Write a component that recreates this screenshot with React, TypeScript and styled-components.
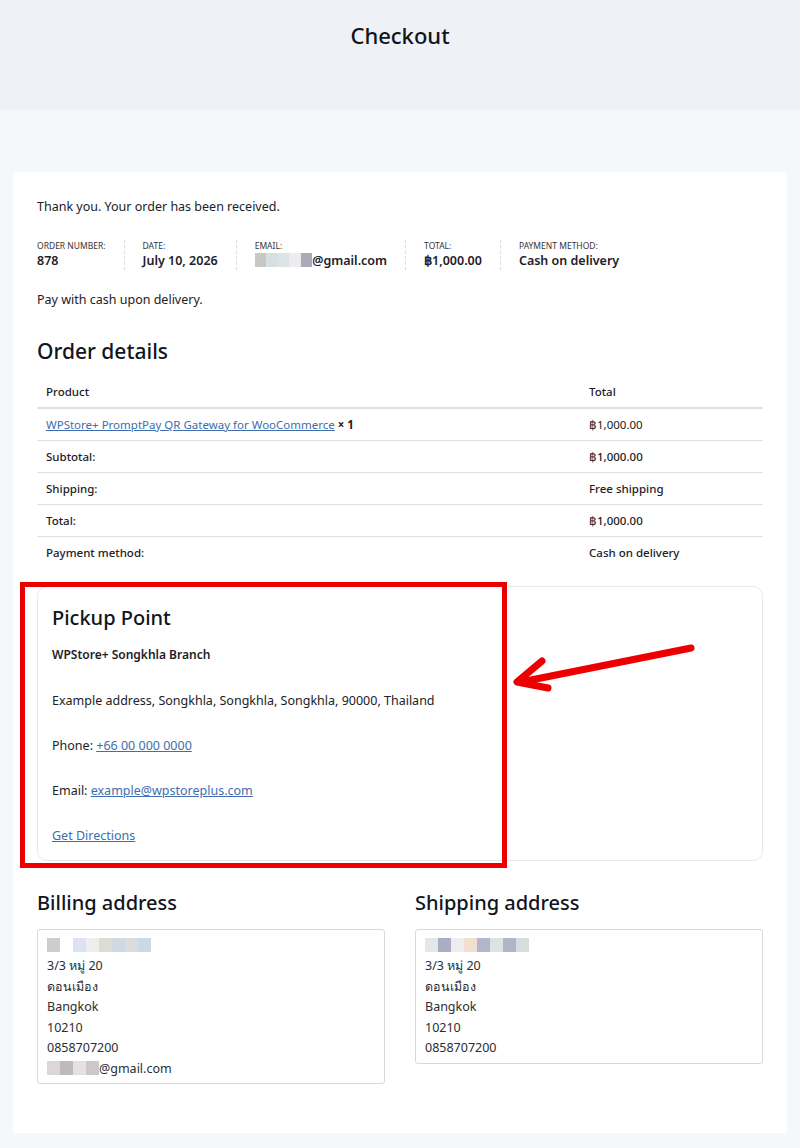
import * as React from 'react';
import styled, { createGlobalStyle } from 'styled-components';

const GlobalStyle = createGlobalStyle`
  html, body {
    margin: 0;
    padding: 0;
    background: #f5f8fa;
    font-family: "Noto Sans", "Open Sans", sans-serif;
    color: #1d2127;
  }
`;

const Header = styled.header`
  height: 110px;
  background: #eef2f6;
  display: flex;
  justify-content: center;
  padding-top: 19px;
  box-sizing: border-box;
`;

const Title = styled.h1`
  margin: 0;
  font-size: 22px;
  line-height: 32px;
  font-weight: 500;
  color: #0f1521;
`;

const Main = styled.main`
  padding: 62px 13px 14px;
`;

const Card = styled.section`
  background: #fff;
  padding: 25px 24px 49px;
`;

const Text = styled.p`
  margin: 0;
  font-size: 12.5px;
  line-height: 20px;
`;

const Overview = styled.ul`
  list-style: none;
  margin: 23px 0 20px;
  padding: 0;
  display: flex;
`;

const OverviewItem = styled.li<{ $last?: boolean }>`
  padding: 0 18px;
  border-right: ${p => (p.$last ? 'none' : '1px dashed #d8dbe0')};
  &:first-child { padding-left: 0; }
`;

const Label = styled.div`
  font-size: 8.5px;
  line-height: 12px;
  text-transform: uppercase;
  color: #333;
`;

const Value = styled.div`
  font-size: 12.5px;
  line-height: 18px;
  font-weight: 600;
`;

const Blur = styled.span<{ $c: string }>`
  display: inline-block;
  width: 13px;
  height: 14px;
  vertical-align: -2px;
  background: ${p => p.$c};
`;

const H2 = styled.h2<{ $size?: number }>`
  margin: 0;
  font-size: ${p => p.$size || 20}px;
  line-height: 28px;
  font-weight: 500;
  color: #0f1521;
`;

const Section = styled.div`
  margin-top: 27px;
`;

const Table = styled.table`
  width: 100%;
  margin-top: 10px;
  border-collapse: collapse;
  font-size: 11.5px;
`;

const Cell = styled.td<{ $w?: string }>`
  padding: 0 9px;
  height: 31px;
  border-bottom: 1px solid #dcdfe4;
  width: ${p => p.$w || 'auto'};
  tr:last-child > & { border-bottom: none; }
`;

const HeadCell = styled.th<{ $w?: string }>`
  text-align: left;
  font-weight: 500;
  padding: 0 9px;
  height: 32px;
  border-bottom: 2px solid #dcdfe4;
  width: ${p => p.$w || 'auto'};
`;

const Link = styled.a`
  color: #3e6db0;
  text-decoration: underline;
  cursor: pointer;
`;

const PickupWrap = styled.div`
  position: relative;
  margin-top: 18px;
`;

const PickupCard = styled.div`
  border: 1px solid #e6e8eb;
  border-radius: 10px;
  padding: 17px 14px 14px;
`;

const Branch = styled.div`
  margin-top: 13px;
  font-size: 12px;
  font-weight: 600;
  line-height: 20px;
`;

const PickupLine = styled.p`
  margin: 25px 0 0;
  font-size: 12.5px;
  line-height: 20px;
  &:first-of-type { margin-top: 26px; }
`;

const Highlight = styled.div`
  position: absolute;
  left: -17px;
  top: -4px;
  width: 487px;
  height: 286px;
  border: 5px solid #ee0000;
  box-sizing: border-box;
  pointer-events: none;
`;

const Arrow = styled.svg`
  position: absolute;
  left: 430px;
  top: 50px;
  pointer-events: none;
  overflow: visible;
`;

const Addresses = styled.div`
  margin-top: 28px;
  display: grid;
  grid-template-columns: 1fr 1fr;
  column-gap: 30px;
  align-items: start;
`;

const AddressBox = styled.address`
  margin-top: 12px;
  border: 1px solid #d6dae0;
  border-radius: 3px;
  padding: 4px 9px 4px;
  font-style: normal;
  font-size: 12.5px;
  line-height: 20.5px;
  color: #2a2e33;
`;

const BlurRow = styled.div`
  display: flex;
  height: 22px;
  align-items: center;
`;

const Name: React.FC<{ colors: string[] }> = ({ colors }) => (
  <BlurRow>{colors.map((c, i) => <Blur key={i} $c={c} />)}</BlurRow>
);

const lines = ['3/3 หมู่ 20', 'ดอนเมือง', 'Bangkok', '10210', '0858707200'];

const rows: [string, string][] = [
  ['Subtotal:', '฿1,000.00'],
  ['Shipping:', 'Free shipping'],
  ['Total:', '฿1,000.00'],
  ['Payment method:', 'Cash on delivery'],
];

export default function App() {
  return (
    <>
      <GlobalStyle />
      <Header><Title>Checkout</Title></Header>
      <Main>
        <Card>
          <Text>Thank you. Your order has been received.</Text>
          <Overview>
            <OverviewItem><Label>Order number:</Label><Value>878</Value></OverviewItem>
            <OverviewItem><Label>Date:</Label><Value>July 10, 2026</Value></OverviewItem>
            <OverviewItem>
              <Label>Email:</Label>
              <Value>
                {['#c9c7c6', '#d6e0e3', '#dde3e6', '#ececee', '#a9abb8'].map((c, i) => <Blur key={i} $c={c} style={{ width: 11.5 }} />)}
                @gmail.com
              </Value>
            </OverviewItem>
            <OverviewItem><Label>Total:</Label><Value>฿1,000.00</Value></OverviewItem>
            <OverviewItem $last><Label>Payment method:</Label><Value>Cash on delivery</Value></OverviewItem>
          </Overview>
          <Text>Pay with cash upon delivery.</Text>

          <Section>
            <H2 $size={21}>Order details</H2>
            <Table>
              <thead>
                <tr><HeadCell>Product</HeadCell><HeadCell $w="165px">Total</HeadCell></tr>
              </thead>
              <tbody>
                <tr>
                  <Cell><Link>WPStore+ PromptPay QR Gateway for WooCommerce</Link> <strong>× 1</strong></Cell>
                  <Cell $w="165px">฿1,000.00</Cell>
                </tr>
                {rows.map(([k, v]) => (
                  <tr key={k}>
                    <Cell style={{ fontWeight: 500 }}>{k}</Cell>
                    <Cell $w="165px" style={{ fontWeight: 500 }}>{v}</Cell>
                  </tr>
                ))}
              </tbody>
            </Table>
          </Section>

          <PickupWrap>
            <PickupCard>
              <H2>Pickup Point</H2>
              <Branch>WPStore+ Songkhla Branch</Branch>
              <PickupLine>Example address, Songkhla, Songkhla, Songkhla, 90000, Thailand</PickupLine>
              <PickupLine>Phone: <Link>+66 00 000 0000</Link></PickupLine>
              <PickupLine>Email: <Link>example@wpstoreplus.com</Link></PickupLine>
              <PickupLine><Link>Get Directions</Link></PickupLine>
            </PickupCard>
            <Highlight />
            <Arrow width="240" height="70" viewBox="0 0 240 70">
              <g stroke="#ee0000" strokeWidth="7" strokeLinecap="round" strokeLinejoin="round" fill="none">
                <line x1="224" y1="12" x2="54" y2="46" />
                <polyline points="75,25 50,46 81,52" />
              </g>
            </Arrow>
          </PickupWrap>

          <Addresses>
            <div>
              <H2>Billing address</H2>
              <AddressBox>
                <Name colors={['#cdcdcd', '#fff', '#dbe3ec', '#eeeeee', '#dcdcd6', '#cfd9e3', '#dadcde', '#c9dae3']} />
                {lines.map(l => <div key={l}>{l}</div>)}
                <div>
                  {['#dcd6d6', '#bcbabd', '#e6e1de', '#cdc9ca'].map((c, i) => <Blur key={i} $c={c} />)}
                  @gmail.com
                </div>
              </AddressBox>
            </div>
            <div>
              <H2>Shipping address</H2>
              <AddressBox>
                <Name colors={['#e4e7e9', '#abadc2', '#eceeed', '#f1e0d2', '#b3b6c9', '#dfe2e2', '#b2b4c7', '#d8dcdf']} />
                {lines.map(l => <div key={l}>{l}</div>)}
              </AddressBox>
            </div>
          </Addresses>
        </Card>
      </Main>
    </>
  );
}
